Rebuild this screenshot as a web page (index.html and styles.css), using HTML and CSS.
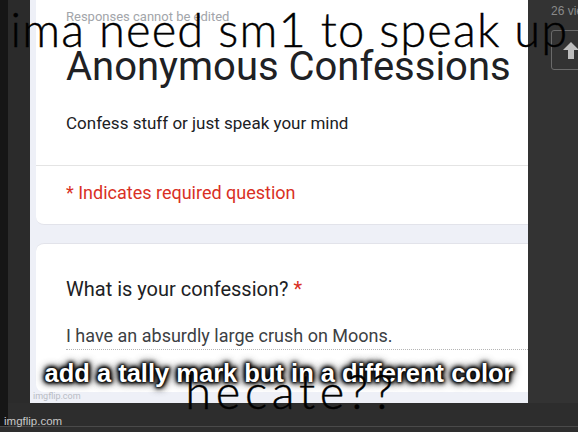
FILE: index.html
```html
<!DOCTYPE html>
<html lang="en">
<head>
  <meta charset="UTF-8">
  <title>ima need sm1 to speak up</title>
  <link rel="stylesheet" href="styles.css">
</head>
<body>
  <div class="meme">
    <div class="frame">
      <div class="edge"></div>
      <div class="gutter"></div>
      <div class="shot">
        <div class="card card-head">
          <p class="note">Responses cannot be edited</p>
          <h1 class="title">Anonymous Confessions</h1>
          <p class="desc">Confess stuff or just speak your mind</p>
          <div class="divider"></div>
          <p class="required">* Indicates required question</p>
        </div>
        <div class="card card-question">
          <p class="question">What is your confession? <span class="star">*</span></p>
          <p class="answer">I have an absurdly large crush on Moons.</p>
        </div>
        <span class="watermark">imgflip.com</span>
        <p class="caption-mid">add a tally mark but in a different color</p>
      </div>
      <div class="side">
        <span class="views">26 views</span>
        <div class="upvote">
          <svg width="16" height="17" viewBox="0 0 16 17"><path d="M8 0 L16 8 H11 V17 H5 V8 H0 Z" fill="#bdbdbd"/></svg>
        </div>
      </div>
    </div>
    <div class="footer">
      <div class="edge"></div>
      <span class="credit">imgflip.com</span>
    </div>

    <p class="caption-top">ima need sm1 to speak up</p>
    <p class="caption-bottom">hecate??</p>
  </div>
</body>
</html>
```

FILE: styles.css
```css
body {
  margin: 0;
  background: #2e2e2e;
  font-family: Roboto, "Liberation Sans", sans-serif;
}

.meme {
  position: relative;
  width: 578px;
  height: 432px;
  overflow: hidden;
  background: #2e2e2e;
}

.frame {
  display: flex;
  height: 403px;
}

.edge {
  width: 8px;
  background: #161616;
  flex-shrink: 0;
}

.gutter {
  width: 22px;
  background: #2b2b2b;
  flex-shrink: 0;
}

.shot {
  position: relative;
  width: 498px;
  flex-shrink: 0;
  background: #eef0f7;
  padding-left: 6px;
  box-sizing: border-box;
  overflow: hidden;
}

.card {
  background: #fff;
  border-radius: 8px;
  padding-left: 30px;
  margin-right: -20px;
}

.card-head {
  height: 225px;
  border-radius: 0 0 8px 8px;
  padding-top: 9px;
  box-sizing: border-box;
  border-bottom: 1px solid #e2e3ea;
}

.note {
  margin: 0;
  font-size: 13px;
  line-height: 16px;
  color: #a2a5aa;
}

.title {
  margin: 22px 0 0;
  font-size: 40px;
  font-weight: 400;
  line-height: 40px;
  color: #202124;
  white-space: nowrap;
}

.desc {
  margin: 26px 0 0;
  font-size: 17px;
  line-height: 20px;
  color: #202124;
}

.divider {
  height: 1px;
  background: #e4e4e4;
  margin: 32px 0 0 -30px;
}

.required {
  margin: 17px 0 0;
  font-size: 18px;
  line-height: 20px;
  color: #d93025;
}

.card-question {
  margin-top: 18px;
  height: 149px;
  padding-top: 33px;
  box-sizing: border-box;
  border-top: 1px solid #e2e3ea;
}

.question {
  margin: 0;
  font-size: 20px;
  line-height: 24px;
  color: #202124;
}

.star {
  color: #d93025;
}

.answer {
  margin: 24px 0 0;
  font-size: 18px;
  line-height: 22px;
  color: #3c4043;
  padding-bottom: 2px;
  border-bottom: 1px dotted #b5b5b5;
}

.watermark {
  position: absolute;
  left: 3px;
  top: 391px;
  font-size: 9px;
  color: #b9bcc4;
}

.caption-mid {
  position: absolute;
  left: 0;
  right: 0;
  top: 361px;
  margin: 0;
  text-align: center;
  font-family: "Liberation Sans", Arial, sans-serif;
  font-weight: bold;
  font-size: 25.5px;
  line-height: 1;
  white-space: nowrap;
  color: #fff;
  text-shadow: 0 0 2px #000, 0 0 3px #000, 0 0 4px #000, 0 0 5px #000, 0 0 6px #000, 0 0 8px #333, 0 0 10px #555;
}

.side {
  flex: 1;
  min-width: 0;
  overflow: hidden;
  padding: 4px 0 0 23px;
  background: #333;
}

.views {
  display: block;
  font-family: "Liberation Sans", Arial, sans-serif;
  font-size: 12px;
  color: #8a8a8a;
  white-space: nowrap;
}

.upvote {
  margin-top: 12px;
  width: 40px;
  height: 40px;
  border: 1px solid #6a6a6a;
  border-radius: 3px;
  box-sizing: border-box;
  display: flex;
  align-items: center;
  padding-left: 11px;
}

.footer {
  display: flex;
  height: 23px;
  border-bottom: 1px solid #4a4a4a;
  background: #2d2d2d;
}

.credit {
  margin-left: -4px;
  padding-top: 11px;
  font-family: "Liberation Sans", Arial, sans-serif;
  font-size: 11.5px;
  line-height: 14px;
  color: #c8c8c8;
}

.caption-top,
.caption-bottom {
  position: absolute;
  left: 0;
  right: 0;
  margin: 0;
  text-align: center;
  font-family: Lato, "Noto Sans", sans-serif;
  font-weight: 300;
  font-size: 47px;
  color: #000;
  line-height: 1;
  white-space: nowrap;
  -webkit-text-stroke: 0.4px #000;
}

.caption-top {
  top: 6px;
  letter-spacing: 1.15px;
  padding-left: 1px;
}

.caption-bottom {
  top: 368px;
  letter-spacing: 4.7px;
  padding-left: 5px;
}
```
